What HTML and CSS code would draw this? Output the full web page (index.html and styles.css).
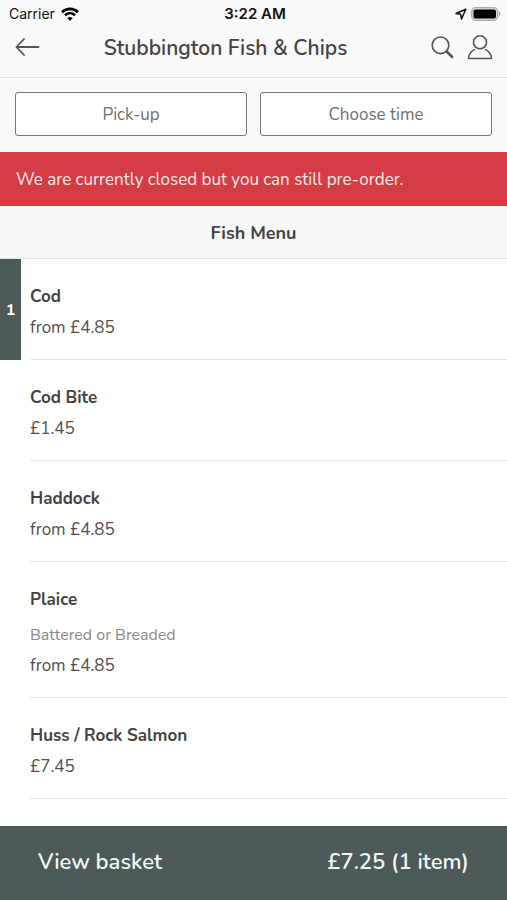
FILE: index.html
```html
<!DOCTYPE html>
<html lang="en">
<head>
<meta charset="utf-8">
<meta name="viewport" content="width=device-width, initial-scale=1">
<title>Stubbington Fish &amp; Chips</title>
<link rel="stylesheet" href="styles.css">
</head>
<body>
<header class="top">
  <div class="status">
    <div class="carrier">Carrier
      <svg width="18" height="14" viewBox="0 0 18 14" fill="none" stroke="#000" stroke-width="2.6" aria-hidden="true"><path d="M1 5.2C5.6.8 12.4.8 17 5.2"/><path d="M4 8.3c2.900-2.700 7.100-2.700 10 0"/><path d="M9 14 6.300 11.100c1.600-1.400 3.800-1.400 5.400 0z" fill="#000" stroke="none"/></svg>
    </div>
    <div class="clock">3:22 AM</div>
    <div class="indicators">
      <svg width="12" height="12" viewBox="0 0 12 12" fill="none" stroke="#111" stroke-width="1.5" stroke-linejoin="round" aria-hidden="true"><path d="M10.800 1.200 1 5.500l4.700.8.8 4.700z"/></svg>
      <svg width="30" height="14" viewBox="0 0 30 14" aria-hidden="true"><rect x=".7" y=".7" width="26" height="12.600" rx="4" fill="#ddd" stroke="#aaa" stroke-width="1.300"/><rect x="2.500" y="2.500" width="22.500" height="9" rx="2" fill="#000"/><path d="M28 4.600c2 .8 2 4 0 4.800z" fill="#aaa"/></svg>
    </div>
  </div>
  <nav class="nav">
    <button class="icon-button" type="button" aria-label="Back">
      <svg width="26" height="26" viewBox="0 0 26 26" fill="none" stroke="#555" stroke-width="1.800" stroke-linecap="round" stroke-linejoin="round"><path d="M24.500 12H2.500M10 4 2.500 12l7.500 8"/></svg>
    </button>
    <h1 class="title">Stubbington Fish &amp; Chips</h1>
    <div class="actions">
      <button class="icon-button" type="button" aria-label="Search">
        <svg width="24" height="26" viewBox="0 0 24 26" fill="none" stroke="#555" stroke-width="1.600" stroke-linecap="round"><circle cx="9.500" cy="10.300" r="8.300"/><path d="m15.700 16.500 5.500 5.500" stroke-width="2.500"/></svg>
      </button>
      <button class="icon-button" type="button" aria-label="Account">
        <svg width="26" height="26" viewBox="0 0 26 26" fill="none" stroke="#555" stroke-width="1.600" stroke-linecap="round" stroke-linejoin="round"><circle cx="13" cy="7.300" r="6.500"/><path d="M7.300 14.600C3.600 16.700 1.700 19.500 1.500 23.500h23c-.2-4-2.100-6.800-5.800-8.900"/></svg>
      </button>
    </div>
  </nav>
</header>
<main class="content">
  <div class="options">
    <button class="option" type="button">Pick-up</button>
    <button class="option" type="button">Choose time</button>
  </div>
  <p class="notice">We are currently closed but you can still pre-order.</p>
  <h2 class="section">Fish Menu</h2>
  <ul class="menu">
    <li class="item"><span class="count">1</span><div class="details"><h3 class="name">Cod</h3><p class="price">from £4.85</p></div></li>
    <li class="item"><div class="details"><h3 class="name">Cod Bite</h3><p class="price">£1.45</p></div></li>
    <li class="item"><div class="details"><h3 class="name">Haddock</h3><p class="price">from £4.85</p></div></li>
    <li class="item"><div class="details"><h3 class="name">Plaice</h3><p class="note">Battered or Breaded</p><p class="price">from £4.85</p></div></li>
    <li class="item"><div class="details"><h3 class="name">Huss / Rock Salmon</h3><p class="price">£7.45</p></div></li>
  </ul>
</main>
<button class="basket" type="button"><span>View basket</span><span>£7.25 (1 item)</span></button>
</body>
</html>
```
FILE: styles.css
```css
* {
  box-sizing: border-box;
}

body {
  display: flex;
  flex-direction: column;
  min-height: 100vh;
  margin: 0;
  background: #fff;
  color: #444;
  font: 17px/24px Nunito, "Nunito Sans", "Noto Sans", sans-serif;
}

h1, h2, h3, p, ul {
  margin: 0;
  padding: 0;
}

button {
  font: inherit;
  color: inherit;
  cursor: pointer;
}

svg {
  display: block;
}

.top {
  background: #f9f9f9;
  border-bottom: 1px solid #e2e4e4;
}

.status {
  display: grid;
  grid-template-columns: 1fr auto 1fr;
  align-items: center;
  height: 28px;
  padding: 0 6px 0 9px;
  color: #111;
  font: 14px/20px Inter, sans-serif;
}

.carrier {
  display: flex;
  align-items: center;
  gap: 6px;
}

.clock {
  font-size: 15px;
  font-weight: 600;
}

.indicators {
  display: flex;
  align-items: center;
  justify-content: flex-end;
  gap: 4px;
}

.nav {
  display: flex;
  align-items: center;
  height: 49px;
  padding: 0 14px 10px;
}

.icon-button {
  padding: 0;
  border: 0;
  background: none;
}

.title {
  flex: 1;
  padding-right: 20px;
  font-size: 21px;
  line-height: 28px;
  font-weight: 600;
  text-align: center;
}

.actions {
  display: flex;
  gap: 12px;
}

.options {
  display: grid;
  grid-template-columns: 1fr 1fr;
  gap: 13px;
  padding: 14px 15px 16px;
  background: #f9f9f9;
}

.option {
  height: 44px;
  padding: 2px 0 0;
  border: 1px solid #727777;
  border-radius: 3px;
  background: #fff;
  color: #6c7171;
}

.notice {
  padding: 16px 16px 14px;
  background: #d43d43;
  color: #fbe9e9;
}

.section {
  padding: 15px 16px 13px;
  border-bottom: 1px solid #e4e6e7;
  background: #f8f8f8;
  font-size: 18px;
  line-height: 24px;
  font-weight: 700;
  text-align: center;
}

.menu {
  list-style: none;
}

.item {
  position: relative;
}

.details {
  margin-left: 30px;
  padding: 26px 16px 19px 0;
  border-bottom: 1px solid #e6e8e8;
}

.name {
  font-size: 17px;
  line-height: 24px;
  font-weight: 700;
}

.note {
  margin-top: 11px;
  color: #8a8a8a;
  font-size: 16px;
  line-height: 24px;
}

.price {
  margin-top: 7px;
  color: #505050;
}

.count {
  position: absolute;
  inset: 0 auto 0 0;
  display: grid;
  place-items: center;
  width: 21px;
  background: #4e5959;
  color: #fff;
  font-size: 16px;
  font-weight: 700;
}

.basket {
  position: sticky;
  bottom: 0;
  display: flex;
  justify-content: space-between;
  align-items: center;
  height: 74px;
  margin-top: auto;
  padding: 0 38px 2px;
  border: 0;
  background: #4e5959;
  color: #f1f7f7;
  font-size: 22px;
  font-weight: 600;
}
```
